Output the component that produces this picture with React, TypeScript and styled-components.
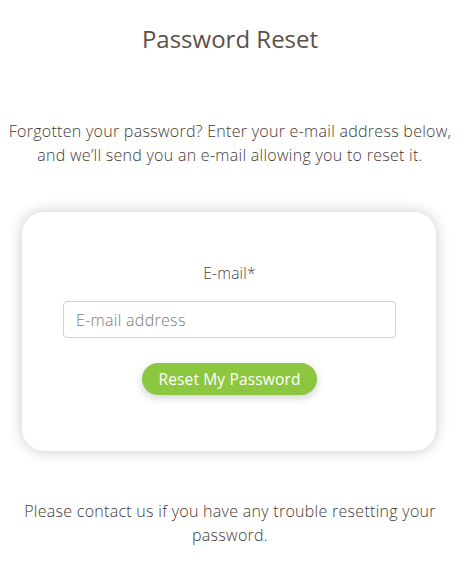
import React from "react";
import styled, { createGlobalStyle } from "styled-components";

const Global = createGlobalStyle`
  html, body { margin: 0; padding: 0; background: #ffffff; }
  body { font-family: "Open Sans", "Noto Sans", sans-serif; color: #4f4a47; }
  * { box-sizing: border-box; }
`;

const Page = styled.main`
  width: 462px;
  padding: 24px 9px 0 7px;
  display: flex;
  flex-direction: column;
  align-items: stretch;
`;

const Title = styled.h1`
  margin: 0;
  font-size: 24px;
  line-height: 29px;
  font-weight: 400;
  color: #5c5049;
  text-align: center;
`;

const Intro = styled.p`
  margin: 66px 0 0;
  font-size: 16px;
  line-height: 24px;
  font-weight: 300;
  letter-spacing: 0.28px;
  text-align: center;
  color: #3f3a37;
`;

const Card = styled.section`
  margin: 45px 17px 0 15px;
  height: 239px;
  background: #fff;
  border-radius: 22px;
  box-shadow: 0 0 14px rgba(0, 0, 0, 0.22);
  padding: 49px 40px 0 41px;
  display: flex;
  flex-direction: column;
  align-items: center;
`;

const Label = styled.label`
  font-size: 15.5px;
  line-height: 24px;
  font-weight: 300;
  letter-spacing: 0.2px;
  color: #444;
`;

const Input = styled.input`
  margin-top: 16px;
  width: 100%;
  height: 37px;
  border: 1px solid #cfcfd6;
  border-radius: 4px;
  padding: 0 12px;
  font-family: inherit;
  font-size: 16px;
  font-weight: 300;
  letter-spacing: 0.3px;
  color: #555;
  outline: none;
  &::placeholder { color: #7a7a7a; }
`;

const Button = styled.button`
  margin-top: 25px;
  height: 32px;
  padding: 0 16px;
  border: none;
  border-radius: 16px;
  background: #8dc63f;
  color: #fff;
  font-family: inherit;
  font-size: 15.5px;
  letter-spacing: 0.15px;
  box-shadow: 0 3px 8px rgba(0, 0, 0, 0.18);
  cursor: pointer;
`;

const Footer = styled.p`
  margin: 48px 0 0;
  padding: 0 14px;
  font-size: 16px;
  line-height: 24px;
  font-weight: 300;
  letter-spacing: 0.28px;
  text-align: center;
  color: #3f3a37;
`;

export default function App() {
  return (
    <>
      <Global />
      <Page>
        <Title>Password Reset</Title>
        <Intro>
          Forgotten your password? Enter your e-mail address below, and we’ll send you an e-mail allowing you to reset it.
        </Intro>
        <Card>
          <Label htmlFor="email">E-mail*</Label>
          <Input id="email" type="email" placeholder="E-mail address" />
          <Button type="button">Reset My Password</Button>
        </Card>
        <Footer>Please contact us if you have any trouble resetting your password.</Footer>
      </Page>
    </>
  );
}
